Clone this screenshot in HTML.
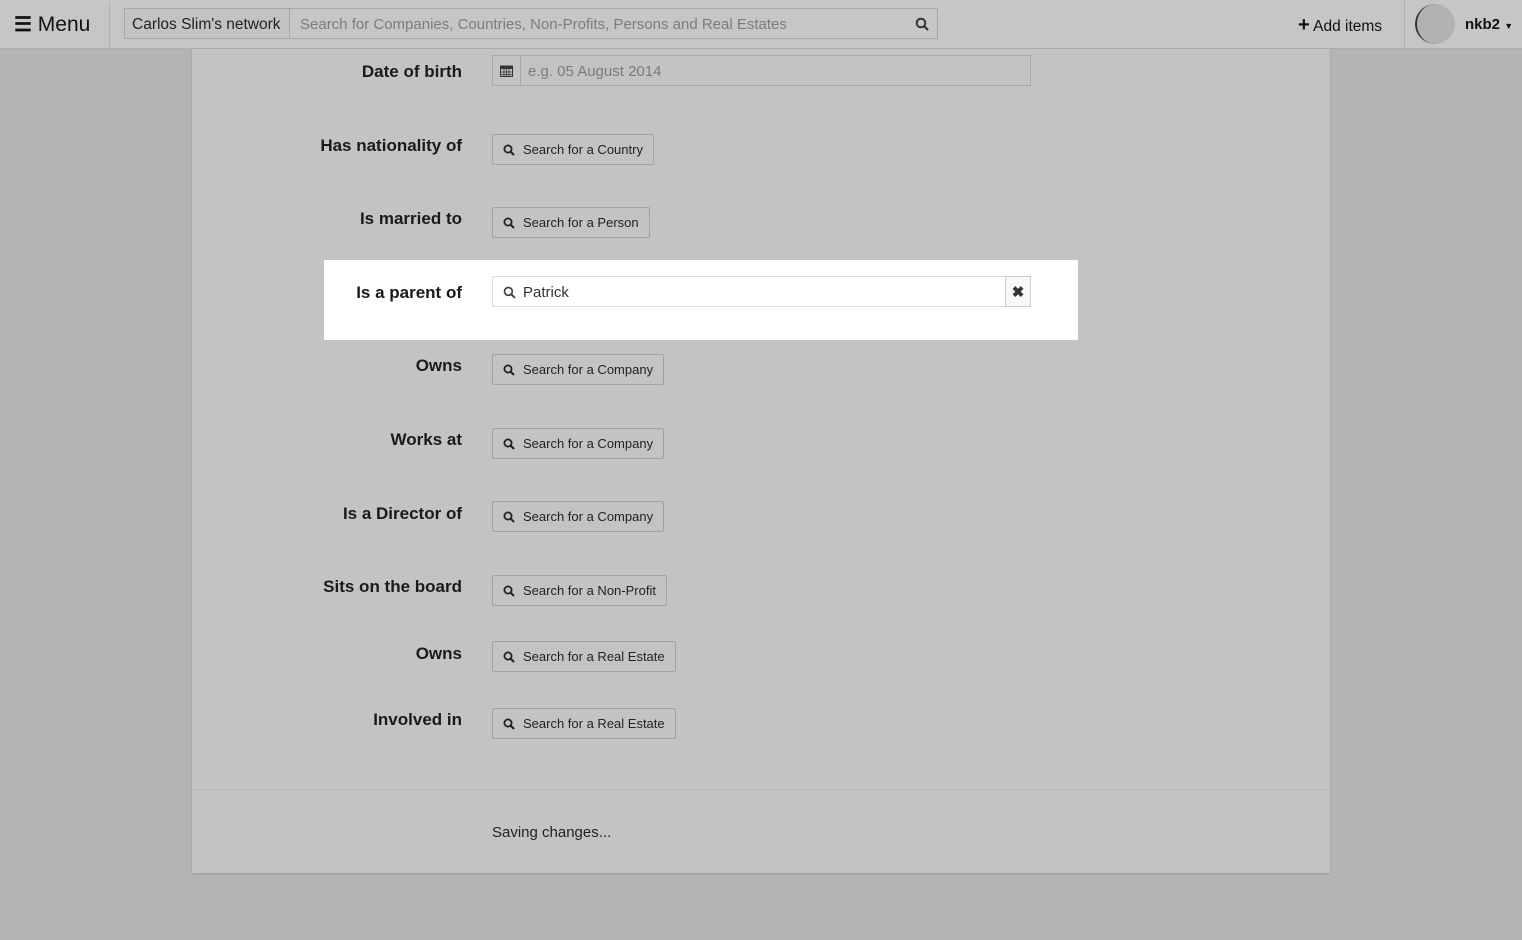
<!DOCTYPE html>
<html><head><meta charset="utf-8"><style>
*{box-sizing:border-box;margin:0;padding:0}
body{width:1522px;height:940px;background:#b4b4b4;font-family:"Liberation Sans",sans-serif;color:#222;position:relative;overflow:hidden}
.hdr{position:absolute;left:0;top:0;width:1522px;height:49px;background:#c6c6c6;border-bottom:1px solid #adadad}
.menu{position:absolute;left:0;top:2px;width:110px;height:46px;border-right:1px solid #b0b0b0;font-size:21px;line-height:46px;padding-left:14px;color:#111}
.sg{position:absolute;left:124px;top:8px;width:814px;height:31px;border:1px solid #a8a8a8;display:flex}
.sg .net{width:165px;border-right:1px solid #a8a8a8;background:#c3c3c3;font-size:15.5px;line-height:31px;padding-left:7px;color:#222}
.sg .ph{flex:1;font-size:15px;line-height:31px;padding-left:10px;color:#7c7c7c}
.add{position:absolute;left:1298px;top:1px;font-size:15.5px;line-height:48px;color:#111}
.usr{position:absolute;left:1404px;top:0;width:118px;height:48px;border-left:1px solid #b0b0b0}
.av{position:absolute;left:10px;top:4px;width:40px;height:40px;border-radius:50%;background:#b2b2b2;border-left:2px solid #333}
.un{position:absolute;left:60px;top:1px;line-height:48px;font-weight:bold;font-size:15px;color:#111}
.panel{position:absolute;left:192px;top:49px;width:1138px;height:824px;background:#c3c3c3;box-shadow:0 1px 2px rgba(0,0,0,.15)}
.foot{position:absolute;left:192px;top:789px;width:1138px;height:84px;border-top:1px solid #b6b6b6;background:#c3c3c3}
.foot span{position:absolute;left:300px;top:34px;font-size:15px;color:#222}
.lbl{position:absolute;right:1060px;font-weight:bold;font-size:17px;color:#1a1a1a;white-space:nowrap}
.btn{position:absolute;left:492px;height:31px;border:1px solid #a2a2a2;border-radius:2px;font-size:13px;line-height:30px;padding:0 10px 0 30px;color:#222;white-space:nowrap}
.btn svg,.inp svg{position:absolute;left:10px;top:9px}
.hl{position:absolute;left:324px;top:260px;width:754px;height:80px;background:#fff}
.inp{position:absolute;left:492px;top:276px;width:539px;height:31px;border:1px solid #ddd;border-radius:2px;font-size:15px;line-height:31px;padding-left:30px;color:#333}
.inp .x{position:absolute;right:-1px;top:-1px;width:26px;height:31px;border:1px solid #ccc;background:#f8f8f8;font-weight:bold;text-align:center;font-size:15px;line-height:31px;color:#333}
.date{position:absolute;left:492px;top:55px;width:539px;height:31px;border:1px solid #a8a8a8;display:flex}
.date .ic{width:28px;border-right:1px solid #a8a8a8;position:relative}
.date .t{font-size:15px;line-height:31px;padding-left:7px;color:#7a7a7a}
</style></head><body>
<div class="hdr">
 <div class="menu"><span style="font-weight:bold;font-size:20px">&#9776;</span> Menu</div>
 <div class="sg"><div class="net">Carlos Slim's network</div><div class="ph">Search for Companies, Countries, Non-Profits, Persons and Real Estates</div>
 <svg style="position:absolute;right:8px;top:8px" width="14" height="14" viewBox="0 0 14 14"><circle cx="6" cy="6" r="4.3" fill="none" stroke="#333" stroke-width="2"/><path d="M9 9l4 4" stroke="#333" stroke-width="2.2"/></svg></div>
 <div class="add"><b style="font-size:20px">+</b> Add items</div>
 <div class="usr"><div class="av"></div><div class="un">nkb2 <span style="font-size:9px">&#9660;</span></div></div>
</div>
<div class="panel"></div>
<div class="foot"><span>Saving changes...</span></div>
<div class="hl"></div>

<div class="lbl" style="top:62px">Date of birth</div>
<div class="date"><div class="ic"><svg style="position:absolute;left:7px;top:8px" width="13" height="13" viewBox="0 0 13 13"><rect x="0.5" y="2" width="12" height="10.5" fill="none" stroke="#333"/><rect x="0.5" y="2" width="12" height="3" fill="#333"/><path d="M0 8h13M0 10.5h13M4 5v8M6.5 5v8M9 5v8" stroke="#333" stroke-width=".8"/></svg></div><div class="t">e.g. 05 August 2014</div></div>

<div class="lbl" style="top:136px">Has nationality of</div>
<div class="btn" style="top:134px"><svg width="12" height="12" viewBox="0 0 12 12"><circle cx="5" cy="5" r="3.6" fill="none" stroke="#222" stroke-width="1.8"/><path d="M7.5 7.5l3.5 3.5" stroke="#222" stroke-width="2"/></svg>Search for a Country</div>

<div class="lbl" style="top:209px">Is married to</div>
<div class="btn" style="top:207px"><svg width="12" height="12" viewBox="0 0 12 12"><circle cx="5" cy="5" r="3.6" fill="none" stroke="#222" stroke-width="1.8"/><path d="M7.5 7.5l3.5 3.5" stroke="#222" stroke-width="2"/></svg>Search for a Person</div>

<div class="lbl" style="top:283px">Is a parent of</div>
<div class="inp"><svg width="13" height="13" viewBox="0 0 12 12"><circle cx="5" cy="5" r="3.6" fill="none" stroke="#444" stroke-width="1.6"/><path d="M7.5 7.5l3.5 3.5" stroke="#444" stroke-width="1.8"/></svg>Patrick<div class="x">&#10006;</div></div>

<div class="lbl" style="top:356px">Owns</div>
<div class="btn" style="top:354px"><svg width="12" height="12" viewBox="0 0 12 12"><circle cx="5" cy="5" r="3.6" fill="none" stroke="#222" stroke-width="1.8"/><path d="M7.5 7.5l3.5 3.5" stroke="#222" stroke-width="2"/></svg>Search for a Company</div>

<div class="lbl" style="top:430px">Works at</div>
<div class="btn" style="top:428px"><svg width="12" height="12" viewBox="0 0 12 12"><circle cx="5" cy="5" r="3.6" fill="none" stroke="#222" stroke-width="1.8"/><path d="M7.5 7.5l3.5 3.5" stroke="#222" stroke-width="2"/></svg>Search for a Company</div>

<div class="lbl" style="top:504px">Is a Director of</div>
<div class="btn" style="top:501px"><svg width="12" height="12" viewBox="0 0 12 12"><circle cx="5" cy="5" r="3.6" fill="none" stroke="#222" stroke-width="1.8"/><path d="M7.5 7.5l3.5 3.5" stroke="#222" stroke-width="2"/></svg>Search for a Company</div>

<div class="lbl" style="top:577px">Sits on the board</div>
<div class="btn" style="top:575px"><svg width="12" height="12" viewBox="0 0 12 12"><circle cx="5" cy="5" r="3.6" fill="none" stroke="#222" stroke-width="1.8"/><path d="M7.5 7.5l3.5 3.5" stroke="#222" stroke-width="2"/></svg>Search for a Non-Profit</div>

<div class="lbl" style="top:644px">Owns</div>
<div class="btn" style="top:641px"><svg width="12" height="12" viewBox="0 0 12 12"><circle cx="5" cy="5" r="3.6" fill="none" stroke="#222" stroke-width="1.8"/><path d="M7.5 7.5l3.5 3.5" stroke="#222" stroke-width="2"/></svg>Search for a Real Estate</div>

<div class="lbl" style="top:710px">Involved in</div>
<div class="btn" style="top:708px"><svg width="12" height="12" viewBox="0 0 12 12"><circle cx="5" cy="5" r="3.6" fill="none" stroke="#222" stroke-width="1.8"/><path d="M7.5 7.5l3.5 3.5" stroke="#222" stroke-width="2"/></svg>Search for a Real Estate</div>
</body></html>
